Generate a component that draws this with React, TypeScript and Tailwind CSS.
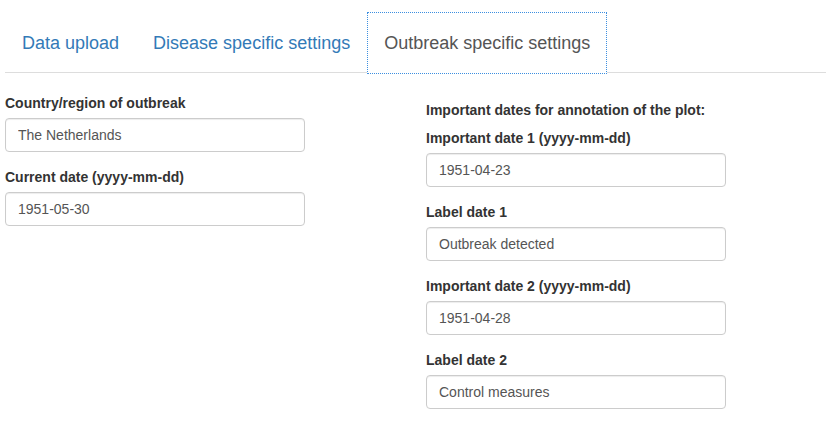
import React from 'react';

const tabs = ['Data upload', 'Disease specific settings', 'Outbreak specific settings'];

const Field: React.FC<{ label: string; value: string }> = ({ label, value }) => (
  <div className="mb-[15px]">
    <label className="block mb-[5px] text-[14px] leading-[20px] font-bold text-[#333]">{label}</label>
    <input
      readOnly
      defaultValue={value}
      className="block w-[300px] h-[34px] px-3 text-[14px] text-[#555] bg-white border border-[#ccc] rounded-[4px] shadow-[inset_0_1px_1px_rgba(0,0,0,0.075)] outline-none"
    />
  </div>
);

const App: React.FC = () => {
  const active = 2;

  return (
    <div className="w-[826px] h-[444px] bg-white pl-[5px] pt-[12px] font-['Liberation_Sans',Arial,sans-serif]">
      <ul className="flex border-b border-[#ddd]">
        {tabs.map((t, i) => (
          <li key={t} className="-mb-[2px]">
            <a
              href="#"
              className={
                i === active
                  ? 'block px-4 py-[17px] text-[18px] leading-[26px] text-[#555] bg-white border border-dotted border-[#3d8fe0]'
                  : 'block px-4 py-[17px] text-[18px] leading-[26px] text-[#337ab7] border border-transparent'
              }
            >
              {t}
            </a>
          </li>
        ))}
      </ul>

      <div className="flex mt-[20px]">
        <div className="w-[421px]">
          <Field label="Country/region of outbreak" value="The Netherlands" />
          <Field label="Current date (yyyy-mm-dd)" value="1951-05-30" />
        </div>
        <div className="pt-[7px]">
          <div className="mb-[8px] text-[14px] leading-[20px] font-bold text-[#333]">
            Important dates for annotation of the plot:
          </div>
          <Field label="Important date 1 (yyyy-mm-dd)" value="1951-04-23" />
          <Field label="Label date 1" value="Outbreak detected" />
          <Field label="Important date 2 (yyyy-mm-dd)" value="1951-04-28" />
          <Field label="Label date 2" value="Control measures" />
        </div>
      </div>
    </div>
  );
};

export default App;
